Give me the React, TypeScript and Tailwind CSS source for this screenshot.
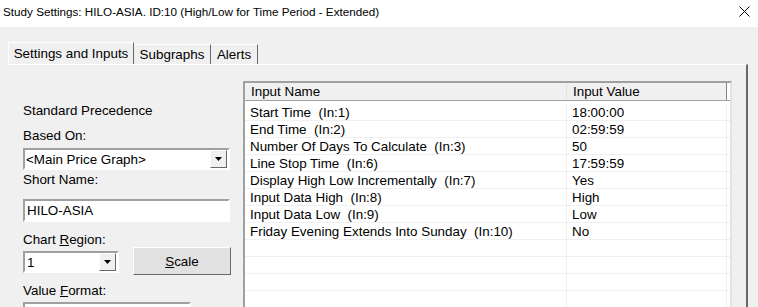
import React from 'react';

const rows: [string, string][] = [
  ['Start Time  (In:1)', '18:00:00'],
  ['End Time  (In:2)', '02:59:59'],
  ['Number Of Days To Calculate  (In:3)', '50'],
  ['Line Stop Time  (In:6)', '17:59:59'],
  ['Display High Low Incrementally  (In:7)', 'Yes'],
  ['Input Data High  (In:8)', 'High'],
  ['Input Data Low  (In:9)', 'Low'],
  ['Friday Evening Extends Into Sunday  (In:10)', 'No'],
  ['', ''],
  ['', ''],
  ['', ''],
  ['', ''],
];

const Arrow = () => (
  <div className="w-[17px] h-[18px] bg-[#f0f0f0] border border-t-white border-l-white border-r-[#696969] border-b-[#696969] flex items-center justify-center">
    <svg width="7" height="4" viewBox="0 0 7 4">
      <path d="M0 0h7L3.5 4z" fill="#000" />
    </svg>
  </div>
);

const Sunken = ({ className, children }: { className: string; children?: React.ReactNode }) => (
  <div className={`border-2 border-t-[#a0a0a0] border-l-[#a0a0a0] border-r-white border-b-white bg-white ${className}`}>
    {children}
  </div>
);

const App = () => {
  return (
    <div className="w-[758px] h-[307px] overflow-hidden bg-[#f0f0f0] text-[13.4px] leading-[15px] text-black font-['Liberation_Sans',Arial,sans-serif]">
      {/* title bar */}
      <div className="h-[27px] bg-white flex items-center justify-between pl-[3px] pr-[8px]">
        <span className="text-[11.7px] leading-[16px] mt-[-3px]">
          Study Settings: HILO-ASIA. ID:10 (High/Low for Time Period - Extended)
        </span>
        <svg width="11" height="11" viewBox="0 0 11 11" className="mt-[-4px]">
          <path d="M0.5 0.5l10 10M10.5 0.5l-10 10" stroke="#000" strokeWidth="1" />
        </svg>
      </div>

      {/* tabs */}
      <div className="mt-[15px] ml-[8px] flex items-end h-[22px]">
        <div className="h-[22px] w-[126px] border border-b-0 border-t-white border-l-white border-r-[#696969] flex items-center justify-center pb-[1px]">
          Settings and Inputs
        </div>
        <div className="h-[20px] w-[77px] border border-b-0 border-l-0 border-t-white border-r-[#696969] flex items-center justify-center">
          Subgraphs
        </div>
        <div className="h-[20px] w-[47px] border border-b-0 border-l-0 border-t-white border-r-[#696969] flex items-center justify-center">
          Alerts
        </div>
      </div>

      {/* panel */}
      <div className="ml-[7px] w-[741px] h-[260px] border-t border-t-white border-r-2 border-r-[#696969] flex">
        {/* left column */}
        <div className="w-[236px] pl-[16px] flex flex-col">
          <div className="mt-[38px]">Standard Precedence</div>
          <div className="mt-[10px]">Based On:</div>
          <Sunken className="mt-[5px] w-[207px] h-[22px] flex items-center justify-between pl-[1px] pr-[1px]">
            <span>&lt;Main Price Graph&gt;</span>
            <Arrow />
          </Sunken>
          <div className="mt-[2px]">Short Name:</div>
          <Sunken className="mt-[12px] w-[207px] h-[23px] flex items-center pl-[2px]">HILO-ASIA</Sunken>
          <div className="mt-[10px]">
            Chart <span className="underline">R</span>egion:
          </div>
          <div className="flex items-start">
            <Sunken className="mt-[4px] w-[96px] h-[22px] flex items-center justify-between pl-[2px] pr-[1px]">
              <span>1</span>
              <Arrow />
            </Sunken>
            <div className="ml-[14px] w-[98px] h-[28px] bg-[#e1e1e1] border border-t-white border-l-white border-r-[#696969] border-b-[#696969] flex items-center justify-center">
              <span>
                <span className="underline">S</span>cale
              </span>
            </div>
          </div>
          <div className="mt-[8px]">
            Value <span className="underline">F</span>ormat:
          </div>
          <Sunken className="mt-[4px] w-[168px] h-[22px]" />
        </div>

        {/* input list */}
        <div className="mt-[16px] w-[489px] h-[240px] border-2 border-t-[#a0a0a0] border-l-[#a0a0a0] border-r-[#e3e3e3] border-b-[#e3e3e3] bg-white flex flex-col">
          <div className="flex h-[18px] bg-[#f0f0f0] border-b border-b-[#a0a0a0]">
            <div className="w-[322px] pl-[6px] flex items-center border-r border-r-[#e3e3e3]">Input Name</div>
            <div className="w-[160px] pl-[6px] flex items-center border-r border-r-[#828282]">Input Value</div>
            <div className="flex-1 bg-white" />
          </div>
          <div className="pt-[3px] flex flex-col">
            {rows.map(([name, value], i) => (
              <div key={i} className="flex h-[17px] border-b border-b-[#f0f0f0]">
                <div className="w-[322px] pl-[5px] flex items-center border-r border-r-[#f0f0f0] whitespace-pre">{name}</div>
                <div className="w-[160px] pl-[5px] flex items-center border-r border-r-[#f0f0f0]">{value}</div>
              </div>
            ))}
          </div>
        </div>
      </div>
    </div>
  );
};

export default App;
